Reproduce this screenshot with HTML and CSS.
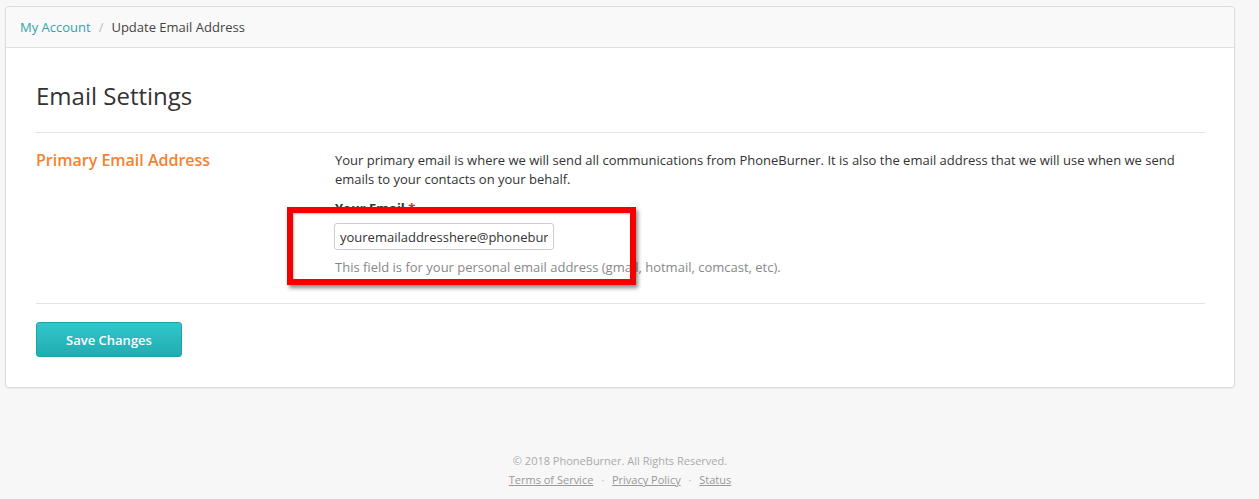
FILE: index.html
```html
<!DOCTYPE html>
<html lang="en">
<head>
  <meta charset="UTF-8" />
  <title>Email Settings</title>
  <link rel="stylesheet" href="styles.css">
</head>
<body>
  <div class="page">
    <main class="card">
      <nav class="breadcrumb">
        <a href="#" class="crumb-link">My Account</a>
        <span class="crumb-sep">/</span>
        <span class="crumb-current">Update Email Address</span>
      </nav>

      <div class="card-body">
        <h1 class="title">Email Settings</h1>

        <section class="setting-row">
          <h2 class="setting-label">Primary Email Address</h2>
          <div class="setting-content">
            <p class="description">Your primary email is where we will send all communications from PhoneBurner. It is also the email address that we will use when we send emails to your contacts on your behalf.</p>

            <div class="email-field">
              <label class="field-label" for="email">Your Email <span class="required">*</span></label>
              <input type="text" id="email" class="text-input" value="youremailaddresshere@phoneburner.com" />
              <p class="help-text">This field is for your personal email address (gmail, hotmail, comcast, etc).</p>
              <div class="highlight"></div>
            </div>
          </div>
        </section>

        <div class="actions">
          <button class="btn-save">Save Changes</button>
        </div>
      </div>
    </main>

    <footer class="footer">
      <p class="copyright">&copy; 2018 PhoneBurner. All Rights Reserved.</p>
      <p class="footer-links">
        <a href="#">Terms of Service</a>
        <span class="dot">&middot;</span>
        <a href="#">Privacy Policy</a>
        <span class="dot">&middot;</span>
        <a href="#">Status</a>
      </p>
    </footer>
  </div>
</body>
</html>
```

FILE: styles.css
```css
* {
  box-sizing: border-box;
}

body {
  margin: 0;
  background: #f7f7f7;
  font-family: 'Open Sans', sans-serif;
  font-size: 13px;
  color: #333;
}

.page {
  width: 1230px;
  margin-left: 5px;
  padding-top: 6px;
}

.card {
  background: #fff;
  border: 1px solid #dcdcdc;
  border-radius: 4px;
  box-shadow: 0 1px 2px rgba(0, 0, 0, 0.06);
}

.breadcrumb {
  display: flex;
  align-items: center;
  height: 41px;
  padding: 0 14px;
  background: #f9f9f9;
  border-bottom: 1px solid #dedede;
  border-radius: 4px 4px 0 0;
}

.crumb-link {
  color: #32a3ab;
  text-decoration: none;
}

.crumb-sep {
  color: #bbb;
  padding: 0 8px;
}

.crumb-current {
  color: #444;
}

.card-body {
  padding: 0 29px 30px 30px;
}

.title {
  margin: 0;
  padding: 33px 0 22px;
  font-size: 24px;
  font-weight: 400;
  line-height: 29px;
  color: #333;
}

.setting-row {
  display: grid;
  grid-template-columns: 299px 1fr;
  padding: 18px 0 26px;
  border-top: 1px solid #e3e3e3;
  border-bottom: 1px solid #e3e3e3;
}

.setting-label {
  margin: 0;
  font-size: 16px;
  font-weight: 600;
  line-height: 19px;
  color: #f5822f;
}

.description {
  margin: 0;
  line-height: 19px;
  color: #333;
}

.email-field {
  position: relative;
  margin-top: 10px;
}

.field-label {
  display: block;
  font-weight: 700;
  line-height: 19px;
}

.required {
  color: #c33;
}

.text-input {
  display: block;
  width: 220px;
  height: 27px;
  margin-top: 5px;
  margin-left: -1px;
  padding: 0 5px;
  border: 1px solid #ccc;
  border-radius: 3px;
  font-family: inherit;
  font-size: 13px;
  color: #333;
}

.help-text {
  margin: 8px 0 0;
  line-height: 19px;
  color: #888;
}

.highlight {
  position: absolute;
  top: 8px;
  left: -48px;
  width: 349px;
  height: 78px;
  border: 6px solid #f40000;
  box-shadow: 2px 3px 4px rgba(0, 0, 0, 0.45), inset 1px 1px 2px rgba(0, 0, 0, 0.25);
  pointer-events: none;
}

.actions {
  padding-top: 18px;
}

.btn-save {
  width: 146px;
  height: 35px;
  border: 1px solid #1ea3a8;
  border-radius: 3px;
  background: linear-gradient(#30c7cc, #22acb1);
  color: #fff;
  font-family: inherit;
  font-size: 13px;
  font-weight: 600;
  cursor: pointer;
}

.footer {
  padding-top: 63px;
  text-align: center;
  font-size: 11px;
  color: #aaa;
}

.copyright {
  margin: 0;
  line-height: 19px;
}

.footer-links {
  margin: 0;
  line-height: 19px;
}

.footer-links a {
  color: #999;
}

.dot {
  padding: 0 5px;
  color: #bbb;
}
```
